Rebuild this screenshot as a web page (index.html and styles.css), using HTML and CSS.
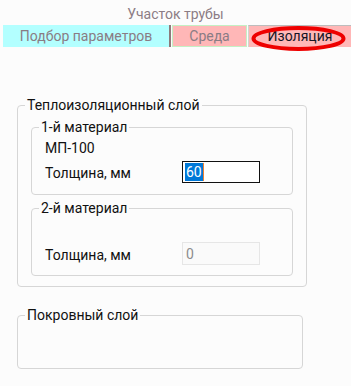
FILE: index.html
```html
<!DOCTYPE html>
<html lang="ru">
<head>
<meta charset="utf-8">
<link rel="stylesheet" href="styles.css">
</head>
<body>
<div class="title">Участок трубы</div>
<div class="tabs">
  <div class="tab tab-params">Подбор параметров</div>
  <div class="tab-sep"></div>
  <div class="tab tab-env">Среда</div>
  <div class="tab tab-ins">Изоляция
    <svg class="mark" width="95" height="25" viewBox="0 0 95 25"><ellipse cx="47.5" cy="12.5" rx="45" ry="10.5" fill="none" stroke="#ee0000" stroke-width="4"/></svg>
  </div>
</div>
<fieldset class="group outer">
  <legend>Теплоизоляционный слой</legend>
  <fieldset class="group inner">
    <legend>1-й материал</legend>
    <div class="name">МП-100</div>
    <div class="row">
      <span class="label">Толщина, мм</span>
      <div class="field active"><span class="sel">60</span><span class="caret"></span></div>
    </div>
  </fieldset>
  <fieldset class="group inner second">
    <legend>2-й материал</legend>
    <div class="name"></div>
    <div class="row">
      <span class="label">Толщина, мм</span>
      <div class="field disabled">0</div>
    </div>
  </fieldset>
</fieldset>
<fieldset class="group cover">
  <legend>Покровный слой</legend>
</fieldset>
</body>
</html>
```
FILE: styles.css
```css
html, body {
  margin: 0;
  padding: 0;
  background: #fcfcfc;
}
body {
  font-family: Roboto, "Noto Sans", sans-serif;
  font-size: 14px;
  color: #111;
  width: 351px;
  height: 386px;
  overflow: hidden;
}
.title {
  height: 25px;
  box-sizing: border-box;
  padding-top: 6px;
  line-height: 16px;
  text-align: center;
  color: #8c7d85;
  font-size: 14px;
}
.tabs {
  display: flex;
  height: 22px;
  margin-left: 3px;
}
.tab {
  box-sizing: border-box;
  height: 22px;
  line-height: 20px;
  text-align: center;
  color: #8a7c84;
}
.tab-params {
  width: 166px;
  background: #b3ffff;
  line-height: 22px;
}
.tab-sep {
  width: 2px;
  background: #8d7b7b;
}
.tab-env {
  width: 75px;
  margin-left: 1px;
  background: #ffb7b7;
  border: 1px solid #c4f0c4;
}
.tab-ins {
  position: relative;
  flex: 1;
  margin-left: 1px;
  background: #ffb7b7;
  border-top: 1px solid #bdbdbd;
  border-left: 1px solid #cfd9cf;
  color: #151525;
}
.mark {
  position: absolute;
  left: 2px;
  top: 0;
}
.group {
  margin: 0;
  border: 1px solid #d6d6d6;
  border-radius: 4px;
  box-sizing: border-box;
  min-width: 0;
}
.group legend {
  margin-left: 7px;
  padding: 0 2px;
  line-height: 14px;
  font-size: 14px;
}
.outer {
  width: 290px;
  margin: 51px 0 0 17px;
  padding: 8px 0 10px 0;
}
.inner {
  width: 262px;
  margin: 0 0 0 13px;
  padding: 6px 0 11px 0;
}
.inner.second {
  margin-top: 6px;
}
.name {
  height: 16px;
  line-height: 16px;
  margin-left: 13px;
}
.row {
  display: grid;
  grid-template-columns: 137px 78px;
  align-items: center;
  margin: 5px 0 0 13px;
  height: 22px;
}
.label {
  line-height: 16px;
  padding-top: 2px;
}
.field {
  box-sizing: border-box;
  height: 22px;
  width: 78px;
  display: flex;
  align-items: center;
  padding-left: 2px;
  line-height: 18px;
}
.field.active {
  border: 1px solid #111;
  background: #fff;
}
.sel {
  background: #0078d7;
  color: #fff;
  padding: 0 1px;
  height: 18px;
}
.caret {
  width: 1px;
  height: 18px;
  background: #f08030;
}
.field.disabled {
  border: 1px solid #e6e6e6;
  background: #fafafa;
  color: #8d8d8d;
  padding-left: 3px;
  height: 23px;
}
.cover {
  width: 286px;
  height: 61px;
  margin: 21px 0 0 17px;
  padding: 0;
}
```
